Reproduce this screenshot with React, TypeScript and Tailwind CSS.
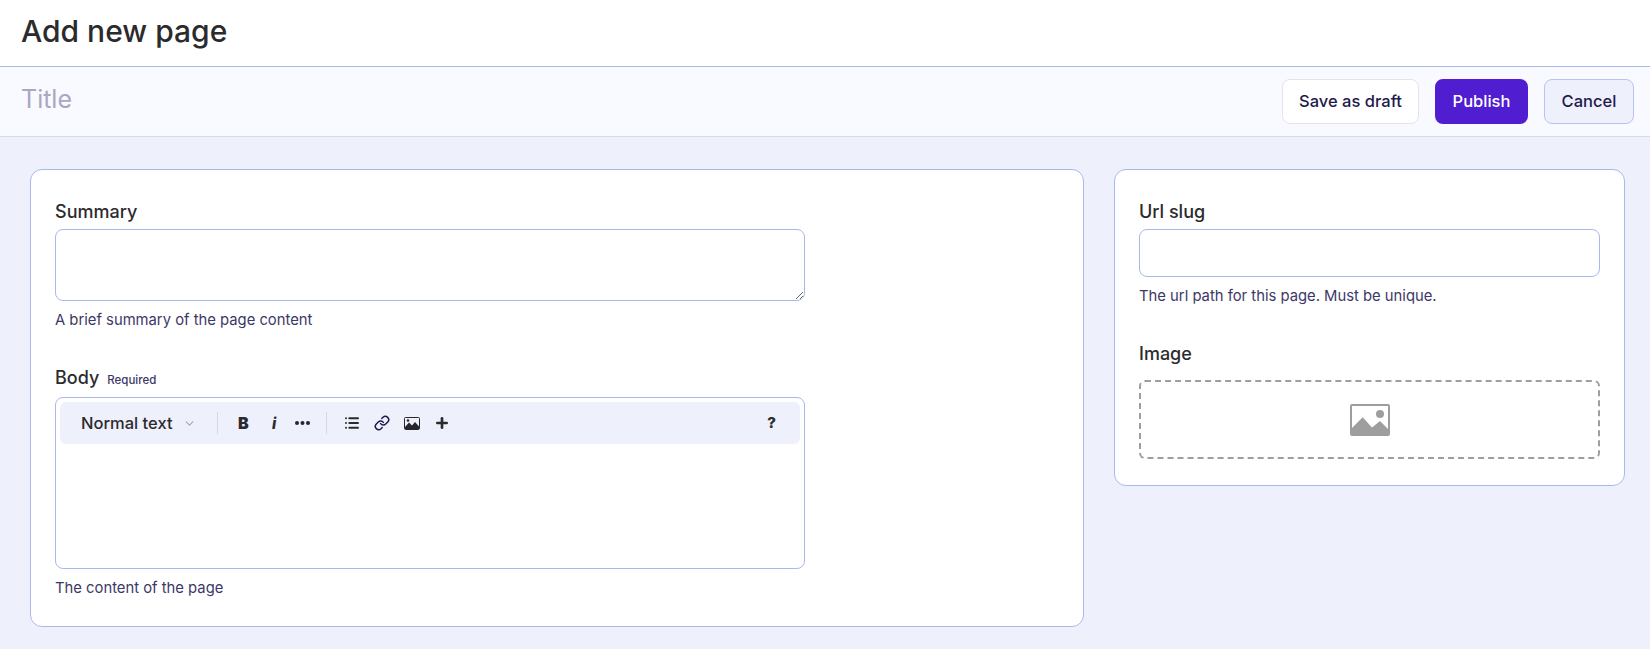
import { ChevronDown, Link, List, Plus } from 'lucide-react';

const font = "font-['Inter','Noto_Sans',sans-serif]";

function ToolbarImageIcon() {
  return (
    <svg width="16" height="13" viewBox="0 0 16 13" className="text-[#26262b]">
      <rect x="0.5" y="0.5" width="15" height="12" rx="1" fill="none" stroke="currentColor" />
      <circle cx="4" cy="3.500" r="1.300" fill="currentColor" />
      <path d="M1 12 L1 10 L5 5.500 L8 8.500 L11 5 L15 9.500 L15 12 Z" fill="currentColor" />
    </svg>
  );
}

function DotsIcon() {
  return (
    <svg width="15" height="4" viewBox="0 0 15 4" className="text-[#26262b]">
      <circle cx="2" cy="2" r="2" fill="currentColor" />
      <circle cx="7.500" cy="2" r="2" fill="currentColor" />
      <circle cx="13" cy="2" r="2" fill="currentColor" />
    </svg>
  );
}

function PlaceholderIcon() {
  return (
    <svg width="40" height="32" viewBox="0 0 40 32" className="text-[#9e9e9e]">
      <path
        fillRule="evenodd"
        fill="currentColor"
        d="M2 0h36a2 2 0 0 1 2 2v28a2 2 0 0 1-2 2H2a2 2 0 0 1-2-2V2a2 2 0 0 1 2-2zM2 2v22L12.700 13.300 22 23.500 30 17l8 8V2H2z"
      />
      <circle cx="30" cy="10" r="4" fill="currentColor" />
    </svg>
  );
}

export default function App() {
  return (
    <div className={`${font} h-[649px] overflow-hidden bg-[#eef0fb] text-[#2b2b2e]`}>
      {/* Page header */}
      <div className="h-[67px] bg-white border-b border-[#aab8ee] px-[21px] pt-[10px]">
        <h1 className="text-[30px] leading-[42px] font-medium">Add new page</h1>
      </div>

      {/* Title bar */}
      <div className="h-[70px] bg-[#f9faff] border-b border-[#d8dcea] pl-[21px] pr-4 flex items-center justify-between">
        <input
          placeholder="Title"
          className="bg-transparent text-[25px] w-[600px] mb-1 outline-none placeholder:text-[#a9a7c2]"
        />
        <div className="flex items-center gap-4 text-[16.5px] font-medium text-[#1f1a4d]">
          <button className="h-[45px] w-[137px] rounded-lg bg-white border border-[#e2e3ec]">Save as draft</button>
          <button className="h-[45px] w-[93px] rounded-lg bg-[#501dd0] text-white">Publish</button>
          <button className="h-[45px] w-[90px] rounded-lg bg-[#eef0fb] border border-[#b9c3ef]">Cancel</button>
        </div>
      </div>

      <div className="flex items-start gap-[30px] pl-[30px] pr-[25px] pt-8">
        {/* Main card */}
        <div className="w-[1054px] h-[458px] bg-white border border-[#aab8ee] rounded-xl px-6 pt-[30px]">
          <div className="w-[750px]">
            <label className="block text-[18px] leading-[24px] font-medium h-[29px]">Summary</label>
            <textarea className="block w-full h-[72px] rounded-lg border border-[#aab8ee] outline-none resize-y" />
            <p className="mt-[9px] text-[14.8px] leading-5 text-[#3d3768]">A brief summary of the page content</p>

            <div className="mt-9 flex items-baseline gap-2 h-[31px]">
              <label className="text-[18px] leading-[24px] font-medium">Body</label>
              <span className="text-[11.5px] font-medium text-[#3d3768]">Required</span>
            </div>
            <div className="h-[172px] rounded-lg border border-[#aab8ee] p-1">
              <div className="h-[42px] rounded-md bg-[#eef0fb] flex items-center pl-[21px] pr-6">
                <span className="text-[16.5px] font-medium w-[102px]">Normal text</span>
                <ChevronDown size={13} className="text-[#a5a5b5]" />
                <div className="w-px h-[22px] bg-[#d5d8e6] ml-[21px] mr-[18px]" />
                <div className="flex items-center w-[90px]">
                  <span className="ml-[2px] w-[34px] text-[16px] leading-none font-black">B</span>
                  <span className="w-[23px] text-[15px] leading-none font-extrabold italic">i</span>
                  <DotsIcon />
                </div>
                <div className="w-px h-[22px] bg-[#d5d8e6] mr-[17px]" />
                <div className="flex items-center gap-[14px]">
                  <List size={16} strokeWidth={3} />
                  <Link size={16} strokeWidth={2.25} className="text-[#1f1a4d]" />
                  <ToolbarImageIcon />
                  <Plus size={16} strokeWidth={4} />
                </div>
                <span className="ml-auto text-[15px] font-extrabold">?</span>
              </div>
            </div>
            <p className="mt-[9px] text-[14.8px] leading-5 text-[#3d3768]">The content of the page</p>
          </div>
        </div>

        {/* Side card */}
        <div className="w-[511px] h-[317px] bg-white border border-[#aab8ee] rounded-xl px-6 pt-[30px]">
          <label className="block text-[18px] leading-[24px] font-medium h-[29px]">Url slug</label>
          <input className="block w-full h-[48px] rounded-lg border border-[#aab8ee] outline-none" />
          <p className="mt-[9px] text-[14.8px] leading-5 text-[#3d3768]">The url path for this page. Must be unique.</p>

          <label className="block mt-9 text-[18px] leading-[24px] font-medium h-[38px]">Image</label>
          <div className="h-[79px] rounded-md border-2 border-dashed border-[#9e9e9e] flex items-center justify-center">
            <PlaceholderIcon />
          </div>
        </div>
      </div>
    </div>
  );
}
